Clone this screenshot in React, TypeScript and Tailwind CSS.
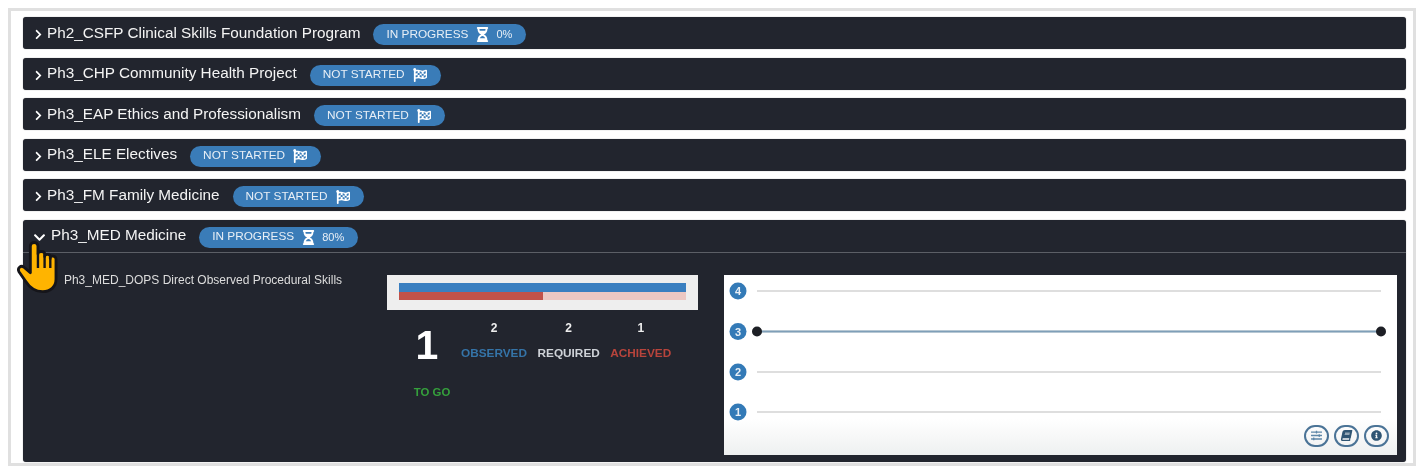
import { FaBook, FaChevronDown, FaChevronRight, FaFlagCheckered, FaHourglassHalf, FaInfoCircle, FaSlidersH } from "react-icons/fa";

type Course = {
  title: string;
  status: string;
  percent?: string;
};

const courses: Course[] = [
  { title: "Ph2_CSFP Clinical Skills Foundation Program", status: "IN PROGRESS", percent: "0%" },
  { title: "Ph3_CHP Community Health Project", status: "NOT STARTED" },
  { title: "Ph3_EAP Ethics and Professionalism", status: "NOT STARTED" },
  { title: "Ph3_ELE Electives", status: "NOT STARTED" },
  { title: "Ph3_FM Family Medicine", status: "NOT STARTED" }
];

function StatusBadge({ status, percent }: { status: string; percent?: string }) {
  return (
    <span className="ml-[13px] mt-[3px] inline-flex h-[21px] items-center rounded-full bg-[#3a7cb8] pl-[13px] pr-[14px] text-[11.8px] text-[#e8eff6]">
      {status}
      {percent ? (
        <>
          <FaHourglassHalf className="ml-[7px] text-[15px] text-white" />
          <span className="ml-[6px] text-[11px]">{percent}</span>
        </>
      ) : (
        <FaFlagCheckered className="ml-[8px] text-[14px] text-white" />
      )}
    </span>
  );
}

function CourseRow({ course }: { course: Course }) {
  return (
    <div className="flex h-[32px] items-center rounded-[3px] bg-[#22252e] pl-[10px] shadow-[0_0_1px_#777]">
      <FaChevronRight className="mt-[3px] text-[11px] text-white" />
      <span className="ml-[3px] text-[15.3px] text-[#f4f4f4]">{course.title}</span>
      <StatusBadge status={course.status} percent={course.percent} />
    </div>
  );
}

function Stat({ value, label, color }: { value: string; label: string; color: string }) {
  return (
    <div className="flex flex-col items-center">
      <span className="text-[12px] font-bold text-[#eeeeee]">{value}</span>
      <span className={`mt-[8px] text-[11.8px] font-bold ${color}`}>{label}</span>
    </div>
  );
}

function LevelChart() {
  const levels = [
    { label: "4", y: 16 },
    { label: "3", y: 56.5 },
    { label: "2", y: 97 },
    { label: "1", y: 137 }
  ];

  return (
    <svg viewBox="0 0 673 150" className="block h-[150px] w-[673px]">
      {levels.map((level) => (
        <g key={level.label}>
          <line x1="33" x2="657" y1={level.y} y2={level.y} stroke="#dedede" strokeWidth="2" />
          <circle cx="14" cy={level.y} r="8.5" fill="#337ab7" />
          <text x="14" y={level.y + 4} textAnchor="middle" fontSize="11" fontWeight="700" fill="#e8eff6">
            {level.label}
          </text>
        </g>
      ))}
      <line x1="33" x2="657" y1="56.5" y2="56.5" stroke="#7f9fb8" strokeWidth="2" />
      <circle cx="33" cy="56.5" r="5" fill="#1d1f25" />
      <circle cx="657" cy="56.5" r="5" fill="#1d1f25" />
    </svg>
  );
}

function ChartButton({ children, tone }: { children: React.ReactNode; tone: string }) {
  return (
    <span className={`flex h-[22px] w-[25px] items-center justify-center rounded-full border-2 border-[#4a7396] text-[11px] ${tone}`}>
      {children}
    </span>
  );
}

function HandCursor() {
  return (
    <svg viewBox="0 0 40 53" className="absolute left-[18px] top-[241px] h-[51px] w-[38px] overflow-visible">
      <path
        d="M13 5C13 0 21 0 21 5L21 13C21 10 28 10 28 13L28 16C28 13 34 13 34 16L34 18C34 14 40 15 40 19L40 40C40 48 34 53 26 53C18 53 13 50 8 42L1 32C-1 28 3 25 6 27L13 33Z"
        fill="#ffb400"
        stroke="#15151a"
        strokeWidth="3"
        strokeLinejoin="round"
      />
      <path d="M21 13V28M28 16V28M34 18V28" fill="none" stroke="#15151a" strokeWidth="2.5" />
    </svg>
  );
}

export default function App() {
  return (
    <main className="relative h-[474px] w-[1423px] overflow-hidden bg-white pl-[8px] pr-[7px] pt-[8px] font-['Liberation_Sans',Arial,sans-serif] blur-[0.4px]">
      <div className="h-[458px] border-[3px] border-[#e0e0e0] bg-white pl-[12px] pr-[7px] pt-[6px]">
        <div className="flex flex-col gap-[8.5px]">
          {courses.map((course) => (
            <CourseRow key={course.title} course={course} />
          ))}

          <section className="h-[242px] rounded-[3px] bg-[#22252e] shadow-[0_0_1px_#777]">
            <div className="flex h-[33px] items-center border-b border-[#5c5f66] pl-[10px]">
              <FaChevronDown className="mt-[4px] text-[13px] text-white" />
              <span className="ml-[5px] text-[15.3px] text-[#f4f4f4]">Ph3_MED Medicine</span>
              <StatusBadge status="IN PROGRESS" percent="80%" />
            </div>

            <div className="flex pl-[32px] pt-[22px]">
              <p className="-mt-[5px] h-fit w-[296px] px-[6px] text-center text-[12px] leading-[21px] text-[#dddddd]">
                Ph3_MED_DOPS Direct Observed Procedural Skills
              </p>

              <div className="ml-[36px] w-[311px]">
                <div className="h-[35px] bg-[#eeeeee] px-[12px] pt-[8px]">
                  <div className="h-[9px] bg-[#3a7fc0]" />
                  <div className="flex h-[8px] bg-[#ecc8c3]">
                    <div className="w-1/2 bg-[#c1524a]" />
                  </div>
                </div>

                <div className="mt-[9px] flex">
                  <div className="ml-[20px] flex w-[50px] flex-col items-center">
                    <span className="mr-[10px] mt-[3px] text-[41px] font-bold leading-[46px] text-white">1</span>
                    <span className="mt-[16px] text-[11.4px] font-bold text-[#35a03c]">TO GO</span>
                  </div>
                  <div className="ml-[4px] flex h-fit gap-[10.5px]">
                    <Stat value="2" label="OBSERVED" color="text-[#3574a8]" />
                    <Stat value="2" label="REQUIRED" color="text-[#cfd3d8]" />
                    <Stat value="1" label="ACHIEVED" color="text-[#b8443c]" />
                  </div>
                </div>
              </div>

              <div className="ml-[26px] flex h-[180px] w-[673px] flex-col bg-gradient-to-b from-white from-80% to-[#eef0f0]">
                <LevelChart />
                <div className="flex justify-end gap-[5px] pr-[8px]">
                  <ChartButton tone="text-[#5d87a8]">
                    <FaSlidersH />
                  </ChartButton>
                  <ChartButton tone="text-[#2f5573]">
                    <FaBook className="-skew-x-12" />
                  </ChartButton>
                  <ChartButton tone="text-[#2f5573]">
                    <FaInfoCircle />
                  </ChartButton>
                </div>
              </div>
            </div>
          </section>
        </div>
      </div>
      <HandCursor />
    </main>
  );
}
